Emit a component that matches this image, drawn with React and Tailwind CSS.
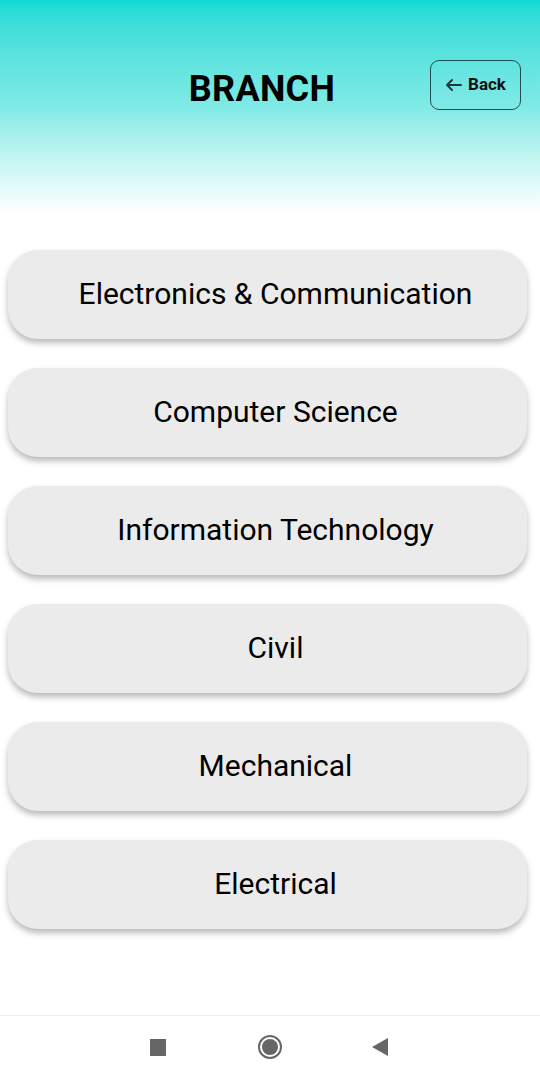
import React from "react";

const branches = [
  "Electronics & Communication",
  "Computer Science",
  "Information Technology",
  "Civil",
  "Mechanical",
  "Electrical",
];

export default function App() {
  return (
    <div
      className="w-[540px] h-[1080px] bg-white flex flex-col overflow-hidden"
      style={{ fontFamily: "Roboto, 'Liberation Sans', sans-serif" }}
    >
      {/* Header */}
      <header className="h-[214px] bg-gradient-to-b from-[#0bdad5] via-[#7feae6] to-white relative flex justify-center pt-[67px]">
        <h1 className="text-[36px] leading-[44px] font-bold text-black tracking-[0.3px] ml-[-16px]">BRANCH</h1>
        <button className="absolute left-[430px] top-[60px] w-[91px] h-[50px] rounded-[9px] border border-[#1f4f50] flex items-center justify-center gap-[6px] text-[17px] font-bold text-[#111]">
          <svg width="17" height="14" viewBox="0 0 17 14" fill="none" stroke="#1f3a3c" strokeWidth="2" strokeLinecap="round" strokeLinejoin="round">
            <path d="M16 7H2M7 2L2 7l5 5" />
          </svg>
          Back
        </button>
      </header>

      {/* Branch list */}
      <main className="flex-1 flex flex-col gap-[29px] pt-[36px] pl-[8px] pr-[13px]">
        {branches.map((b) => (
          <button
            key={b}
            className="h-[89px] w-full rounded-[30px] bg-[#ebebeb] shadow-[0_4px_6px_rgba(0,0,0,0.28)] flex items-center justify-center pl-4 pb-[3px] text-[30px] font-normal text-black"
          >
            {b}
          </button>
        ))}
      </main>

      {/* Android nav bar */}
      <nav className="h-[65px] border-t border-[#ececec] flex items-center pl-[150px] pb-[2px]">
        <span className="w-[16px] h-[17px] bg-[#666]" />
        <span className="ml-[92px] w-[24px] h-[24px] rounded-full border-2 border-[#666] flex items-center justify-center">
          <span className="w-[16px] h-[16px] rounded-full bg-[#666]" />
        </span>
        <svg className="ml-[90px]" width="16" height="18" viewBox="0 0 16 18">
          <path d="M16 0V18L0 9Z" fill="#666" />
        </svg>
      </nav>
    </div>
  );
}
